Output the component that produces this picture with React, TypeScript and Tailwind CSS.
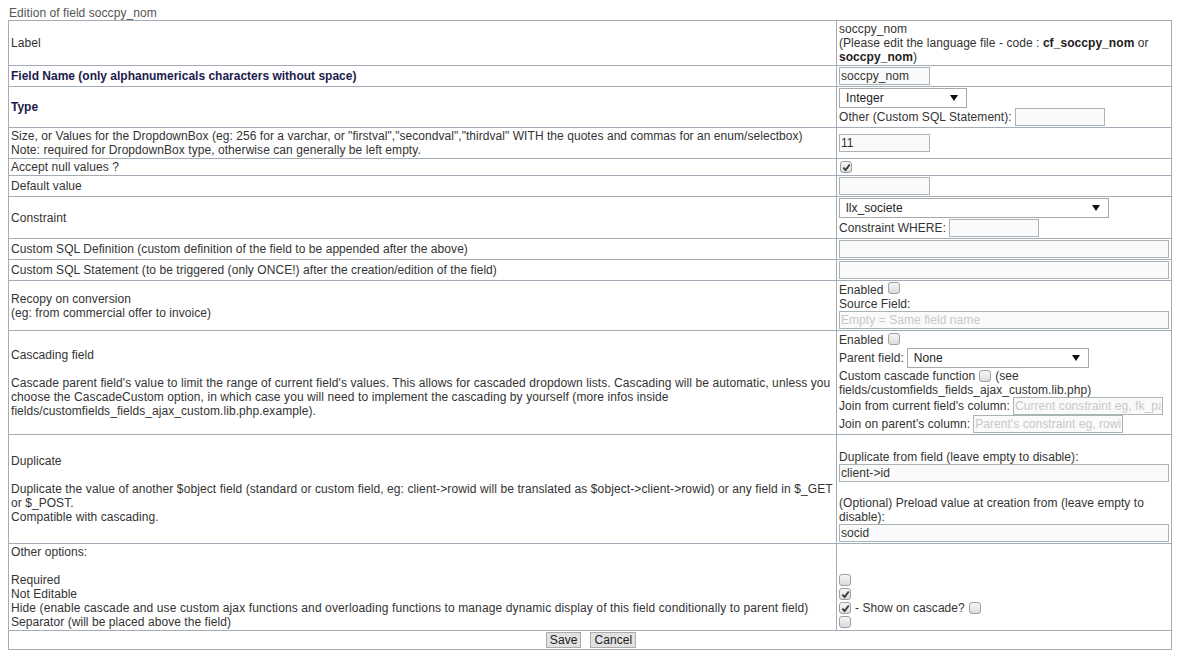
import React from 'react';

// Edition form of a custom field, old-style bordered table
const cell = 'border border-[#a3adb8] px-[2px] py-px align-middle';
const inputCls =
  'h-[18px] border border-[#a9b5b5] bg-[#fafafa] px-px text-[12px] leading-[14px] text-[#333] outline-none placeholder:text-[#c8c8c8]';

function Check({ checked = false }: { checked?: boolean }) {
  return (
    <span className="inline-flex h-[12px] w-[12px] shrink-0 items-center justify-center rounded-[3px] border border-[#a0a0a0] bg-linear-to-b from-[#f6f6f6] to-[#dcdcdc] align-[-2px]">
      {checked && (
        <svg viewBox="0 0 10 10" className="h-[9px] w-[9px]">
          <path d="M1.5 5.2 L4 7.8 L8.6 1.6" stroke="#3a3a3a" strokeWidth="2.1" fill="none" />
        </svg>
      )}
    </span>
  );
}

function Select({ value, width }: { value: string; width: string }) {
  return (
    <div
      className={`flex h-[20px] items-center justify-between border border-[#a9a9a9] bg-white pr-[8px] pl-[6px] text-[12px] text-[#222] ${width}`}
    >
      <span>{value}</span>
      <svg viewBox="0 0 8 6" className="h-[6px] w-[8px]">
        <path d="M0 0 H8 L4 6 Z" fill="#111" />
      </svg>
    </div>
  );
}

function Field({ value = '', placeholder, width }: { value?: string; placeholder?: string; width: string }) {
  return <input readOnly value={value} placeholder={placeholder} className={`block ${inputCls} ${width}`} />;
}

export default function App() {
  return (
    <div className="min-h-[657px] bg-white font-['Liberation_Sans',Arial,sans-serif] text-[12px] leading-[14px] tracking-[0.06px] text-[#333]">
      <div className="pt-[6px] pl-[9px] text-[#555]">Edition of field soccpy_nom</div>
      <table className="ml-[8px] w-[1164px] table-fixed border-collapse">
        <colgroup>
          <col className="w-[828px]" />
          <col />
        </colgroup>
        <tbody>
          <tr>
            <td className={cell}>Label</td>
            <td className={cell}>
              soccpy_nom
              <br />
              (Please edit the language file - code : <b className="text-[#222]">cf_soccpy_nom</b> or{' '}
              <b className="text-[#222]">soccpy_nom</b>)
            </td>
          </tr>
          <tr>
            <td className={`${cell} font-bold tracking-normal text-[#1b1b4d]`}>Field Name (only alphanumericals characters without space)</td>
            <td className={cell}>
              <Field value="soccpy_nom" width="w-[91px]" />
            </td>
          </tr>
          <tr>
            <td className={`${cell} font-bold tracking-normal text-[#1b1b4d]`}>Type</td>
            <td className={cell}>
              <Select value="Integer" width="w-[128px]" />
              <div className="flex items-center gap-[3px]">
                <span>Other (Custom SQL Statement):</span>
                <Field width="w-[90px]" />
              </div>
            </td>
          </tr>
          <tr>
            <td className={cell}>
              <span className="tracking-[0.05px]">
                Size, or Values for the DropdownBox (eg: 256 for a varchar, or "firstval","secondval","thirdval" WITH the quotes and commas for an enum/selectbox)
              </span>
              <br />
              Note: required for DropdownBox type, otherwise can generally be left empty.
            </td>
            <td className={cell}>
              <Field value="11" width="w-[91px]" />
            </td>
          </tr>
          <tr>
            <td className={cell}>Accept null values ?</td>
            <td className={cell}>
              <div className="flex h-[14px] items-center pl-px">
                <Check checked />
              </div>
            </td>
          </tr>
          <tr>
            <td className={cell}>Default value</td>
            <td className={cell}>
              <Field width="w-[91px]" />
            </td>
          </tr>
          <tr>
            <td className={cell}>Constraint</td>
            <td className={cell}>
              <Select value="llx_societe" width="w-[270px]" />
              <div className="flex h-[19px] items-center gap-[3px]">
                <span>Constraint WHERE:</span>
                <Field width="w-[90px]" />
              </div>
            </td>
          </tr>
          <tr>
            <td className={cell}>Custom SQL Definition (custom definition of the field to be appended after the above)</td>
            <td className={cell}>
              <Field width="w-full" />
            </td>
          </tr>
          <tr>
            <td className={cell}>Custom SQL Statement (to be triggered (only ONCE!) after the creation/edition of the field)</td>
            <td className={cell}>
              <Field width="w-full" />
            </td>
          </tr>
          <tr>
            <td className={cell}>
              Recopy on conversion
              <br />
              (eg: from commercial offer to invoice)
            </td>
            <td className={cell}>
              <div className="flex h-[15px] items-center gap-[5px]">
                <span>Enabled</span>
                <span className="-mt-[3px] flex">
                  <Check />
                </span>
              </div>
              <div>Source Field:</div>
              <Field placeholder="Empty = Same field name" width="w-full" />
            </td>
          </tr>
          <tr>
            <td className={cell}>
              Cascading field
              <br />
              <br />
              <span className="whitespace-nowrap tracking-[0.09px]">
                Cascade parent field's value to limit the range of current field's values. This allows for cascaded dropdown lists. Cascading will be automatic, unless you
              </span>
              <br />
              <span className="whitespace-nowrap tracking-[0.09px]">
                choose the CascadeCustom option, in which case you will need to implement the cascading by yourself (more infos inside
              </span>
              <br />
              fields/customfields_fields_ajax_custom.lib.php.example).
            </td>
            <td className={cell}>
              <div className="flex h-[16px] items-center gap-[5px]">
                <span>Enabled</span>
                <span className="-mt-[3px] flex">
                  <Check />
                </span>
              </div>
              <div className="flex items-center gap-[3px]">
                <span>Parent field:</span>
                <Select value="None" width="w-[182px]" />
              </div>
              <div className="pt-px">
                <div className="flex items-center gap-[4px]">
                  <span>Custom cascade function</span>
                  <Check />
                  <span>(see</span>
                </div>
                <div>fields/customfields_fields_ajax_custom.lib.php)</div>
              </div>
              <div className="flex items-center gap-[3px]">
                <span>Join from current field's column:</span>
                <Field placeholder="Current constraint eg, fk_parent" width="w-[150px]" />
              </div>
              <div className="flex items-center gap-[3px]">
                <span>Join on parent's column:</span>
                <Field placeholder="Parent's constraint eg, rowid" width="w-[150px]" />
              </div>
            </td>
          </tr>
          <tr>
            <td className={cell}>
              Duplicate
              <br />
              <br />
              <span className="whitespace-nowrap tracking-[0.1px]">
                Duplicate the value of another $object field (standard or custom field, eg: client-&gt;rowid will be translated as $object-&gt;client-&gt;rowid) or any field in $_GET
              </span>
              <br />
              or $_POST.
              <br />
              Compatible with cascading.
            </td>
            <td className={cell}>
              <br />
              <div>Duplicate from field (leave empty to disable):</div>
              <Field value="client->id" width="w-full" />
              <br />
              <div>(Optional) Preload value at creation from (leave empty to disable):</div>
              <Field value="socid" width="w-full" />
            </td>
          </tr>
          <tr>
            <td className={cell}>
              Other options:
              <br />
              <br />
              Required
              <br />
              Not Editable
              <br />
              <span className="tracking-[0.12px]">
                Hide (enable cascade and use custom ajax functions and overloading functions to manage dynamic display of this field conditionally to parent field)
              </span>
              <br />
              Separator (will be placed above the field)
            </td>
            <td className={`${cell} !align-bottom`}>
              <div className="flex h-[14px] items-center">
                <Check />
              </div>
              <div className="flex h-[14px] items-center">
                <Check checked />
              </div>
              <div className="flex h-[14px] items-center gap-[4px]">
                <Check checked />
                <span>- Show on cascade?</span>
                <Check />
              </div>
              <div className="flex h-[14px] items-center">
                <Check />
              </div>
            </td>
          </tr>
          <tr>
            <td colSpan={2} className={cell}>
              <div className="flex justify-center gap-[9px] pl-[2px]">
                <button className="h-[16px] border border-[#adadad] bg-[#e1e1e1] px-[3px] text-[12px] leading-[14px] text-[#222]">
                  Save
                </button>
                <button className="h-[16px] border border-[#adadad] bg-[#e1e1e1] px-[3px] text-[12px] leading-[14px] text-[#222]">
                  Cancel
                </button>
              </div>
            </td>
          </tr>
        </tbody>
      </table>
    </div>
  );
}
